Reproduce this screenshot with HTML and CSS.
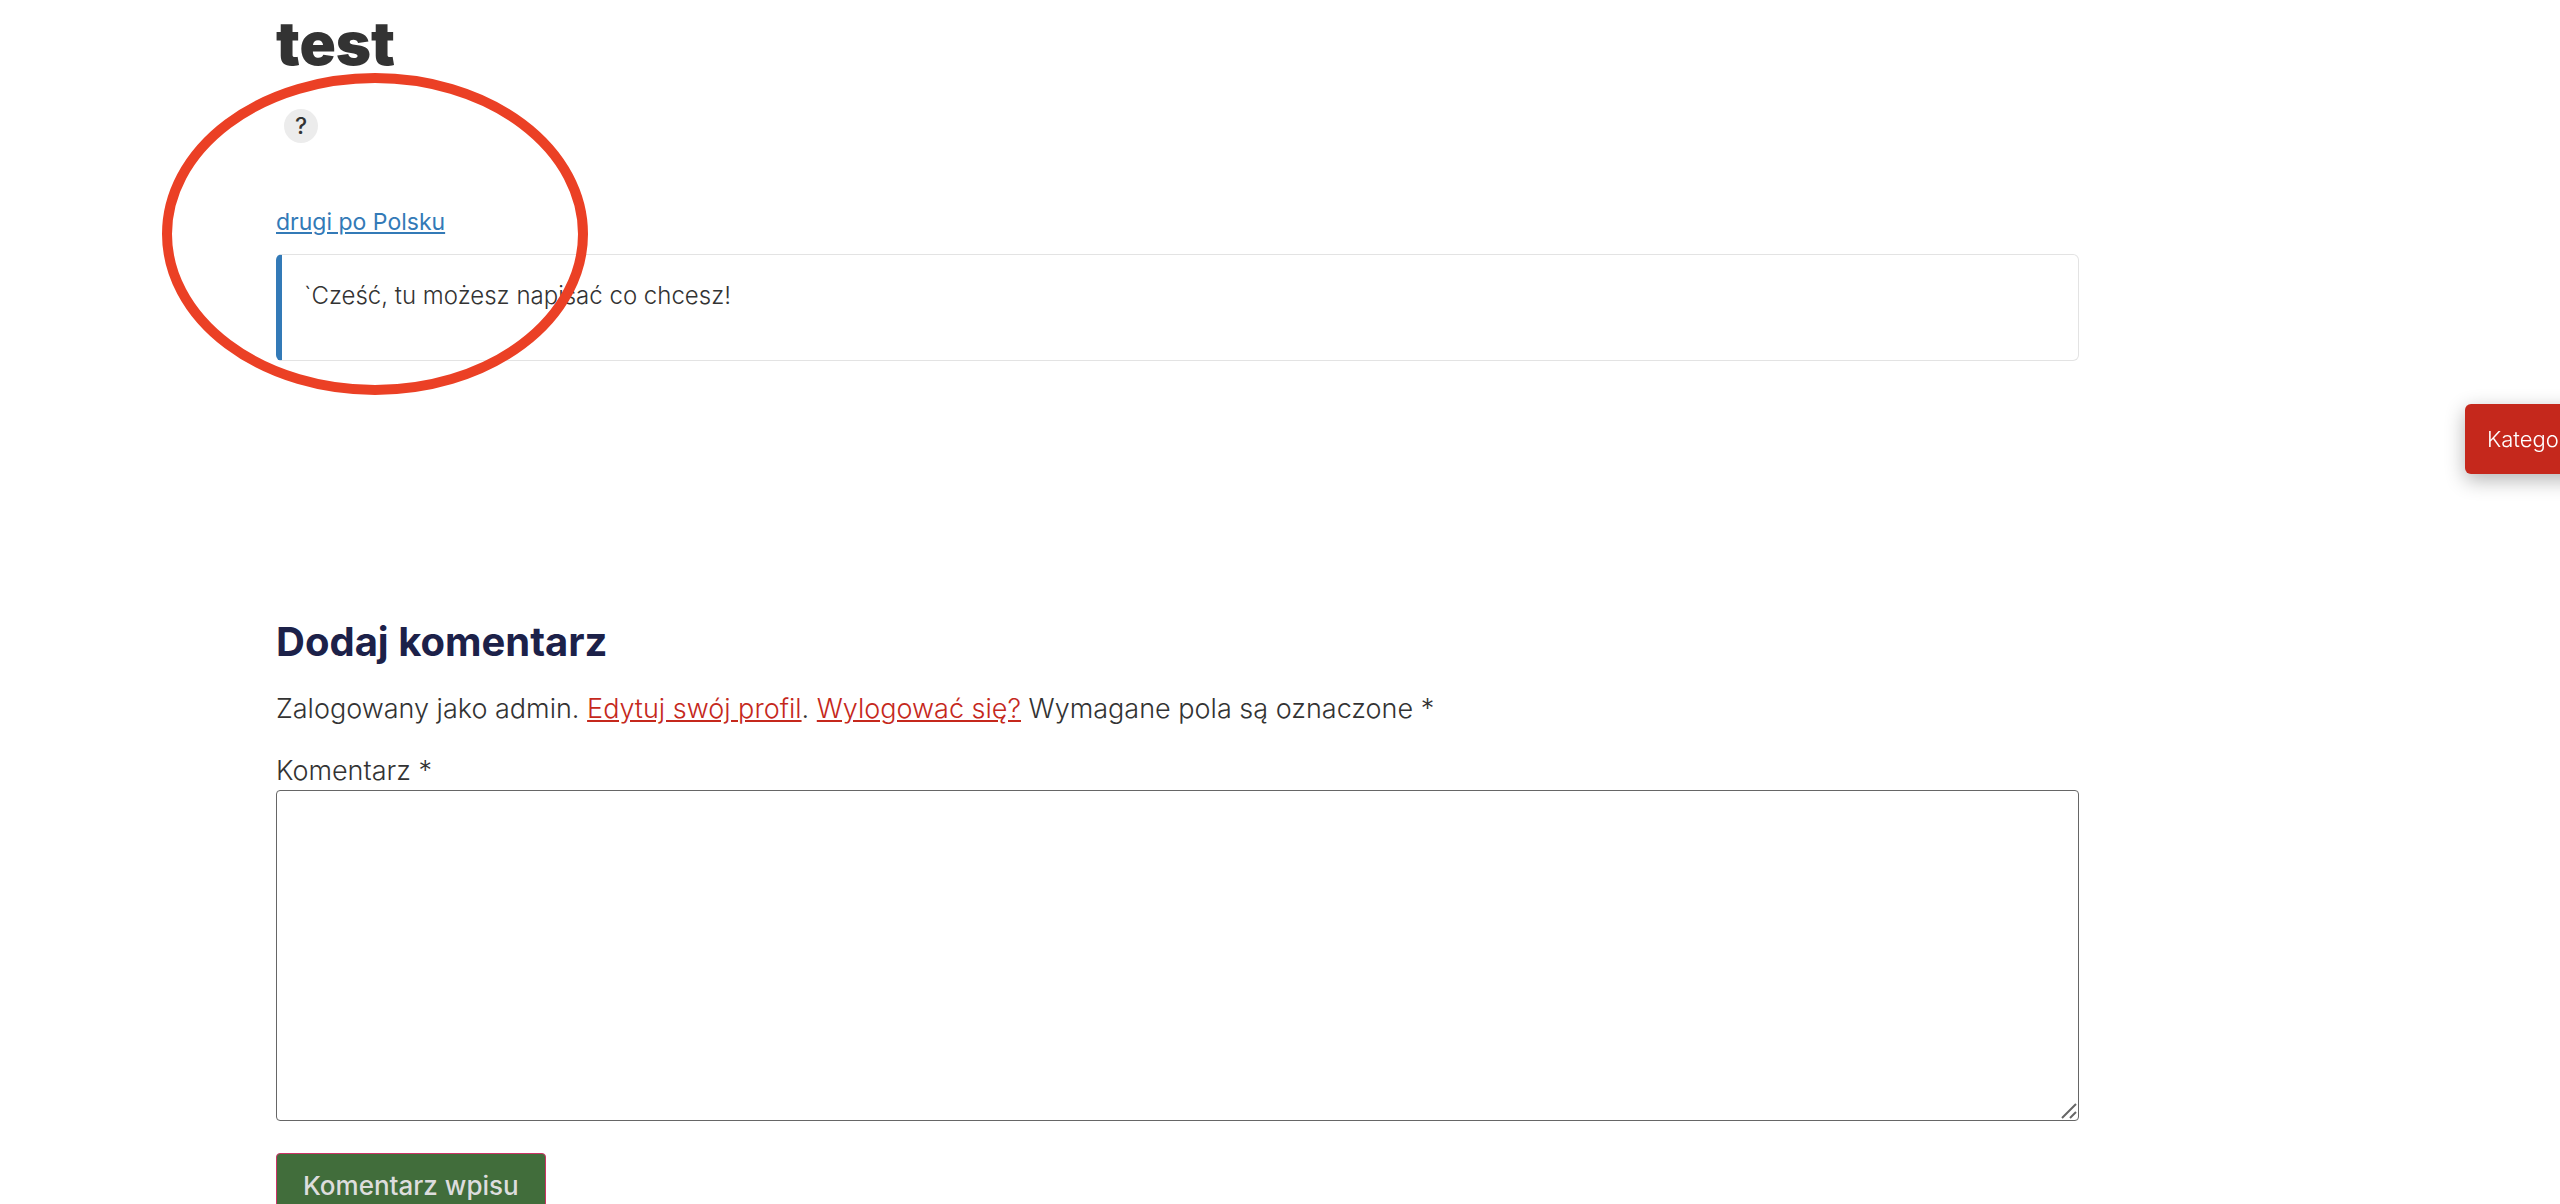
FILE: index.html
```html
<!DOCTYPE html>
<html lang="pl">
  <head>
    <meta charset="utf-8">
    <title>test</title>
    <link rel="stylesheet" href="styles.css">
  </head>
  <body>
    <main class="page">
      <h1 class="title">test</h1>
      <button type="button" class="help">?</button>
      <a href="#" class="post-link">drugi po Polsku</a>
      <div class="note">`Cześć, tu możesz napisać co chcesz!</div>

      <section class="respond">
        <h2 class="respond-title">Dodaj komentarz</h2>
        <form class="comment-form">
          <p class="logged-in">Zalogowany jako admin. <a href="#">Edytuj swój profil</a>. <a href="#">Wylogować się?</a> Wymagane pola są oznaczone *</p>
          <label class="comment-label" for="comment">Komentarz *</label>
          <div class="comment-field">
            <textarea id="comment" name="comment"></textarea>
            <svg class="grip" width="16" height="16" viewBox="0 0 16 16">
              <path d="M1 15L15 1M9 15L15 9" />
            </svg>
          </div>
          <button type="submit" class="submit">Komentarz wpisu</button>
        </form>
      </section>
    </main>

    <button type="button" class="categories">Kategorie</button>

    <svg class="marker" viewBox="0 0 428 324">
      <ellipse cx="214" cy="162" rx="208" ry="156" />
    </svg>
  </body>
</html>
```

FILE: styles.css
```css
* {
  box-sizing: border-box;
}

html {
  overflow: hidden;
}

body {
  margin: 0;
  background: #fff;
  color: #333;
  font-family: Inter, "Open Sans", sans-serif;
  font-size: 27px;
  font-weight: 300;
  line-height: 38px;
}

button,
textarea {
  font: inherit;
}

.page {
  display: flex;
  flex-direction: column;
  align-items: flex-start;
  padding: 11px 481px 32px 276px;
}

.title {
  margin: 0 0 34px;
  font-size: 60px;
  font-weight: 900;
  line-height: 64px;
}

.help {
  width: 34px;
  height: 34px;
  margin: 0 0 60px 8px;
  padding: 0;
  border: 0;
  border-radius: 50%;
  background: #ececec;
  color: #333;
  font-size: 23px;
  font-weight: 500;
  line-height: 34px;
}

.post-link {
  color: #337ab7;
  font-size: 23px;
  font-weight: 400;
  line-height: 38px;
}

.note {
  align-self: stretch;
  margin-top: 13px;
  padding: 22px 22px 45px;
  border: 1px solid #e3e3e3;
  border-left: 6px solid #337ab7;
  border-radius: 6px;
  font-size: 24px;
  line-height: 38px;
}

.respond {
  align-self: stretch;
  margin-top: 257px;
}

.respond-title {
  margin: 0 0 24px;
  color: #1c2149;
  font-size: 40px;
  font-weight: 700;
  line-height: 48px;
}

.logged-in {
  margin: 0 0 24px;
}

.logged-in a {
  color: #c5281c;
}

.comment-label {
  display: block;
}

.comment-field {
  position: relative;
  margin-bottom: 32px;
}

#comment {
  display: block;
  width: 100%;
  height: 331px;
  padding: 8px 16px;
  border: 1px solid #666;
  border-radius: 4px;
  resize: vertical;
}

#comment::-webkit-resizer {
  background: transparent;
}

.grip {
  position: absolute;
  right: 2px;
  bottom: 2px;
  fill: none;
  stroke: #666;
  stroke-width: 2;
  pointer-events: none;
}

.submit {
  padding: 12px 26px;
  border: 1px solid #c36;
  border-radius: 4px;
  background: #416d3b;
  color: #ddd;
  font-size: 26px;
  font-weight: 500;
  line-height: 40px;
}

.categories {
  position: fixed;
  top: 404px;
  left: calc(100% - 95px);
  padding: 16px 22px;
  border: 0;
  border-radius: 6px;
  background: #c5281c;
  color: #fff;
  font-size: 22px;
  box-shadow: 0 6px 20px rgba(0, 0, 0, 0.3);
}

.marker {
  position: absolute;
  top: 72px;
  left: 161px;
  width: 428px;
  fill: none;
  stroke: #eb4025;
  stroke-width: 10;
  pointer-events: none;
}
```
